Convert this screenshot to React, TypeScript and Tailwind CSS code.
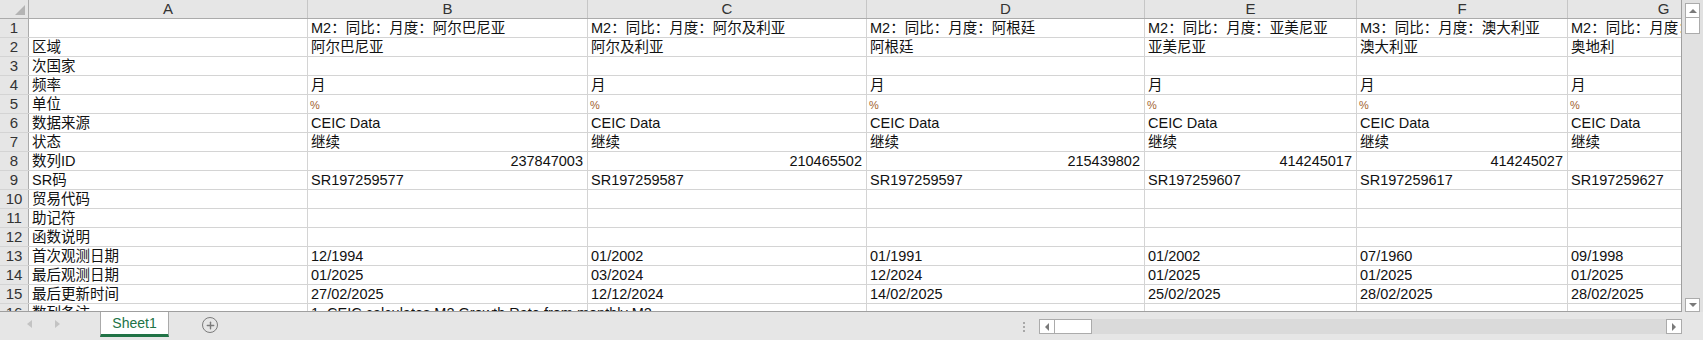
import { Plus } from "lucide-react";

type Cell = string | { text: string; align?: "right" | "pct" | "overflow" };

const columns = [
  { label: "A", width: "w-[279px]" },
  { label: "B", width: "w-[280px]" },
  { label: "C", width: "w-[279px]" },
  { label: "D", width: "w-[278px]" },
  { label: "E", width: "w-[212px]" },
  { label: "F", width: "w-[211px]" },
  { label: "G", width: "w-[192px]" },
];

const num = (text: string): Cell => ({ text, align: "right" });
const pct: Cell = { text: "%", align: "pct" };

const rows: Cell[][] = [
  [
    "",
    "M2：同比：月度：阿尔巴尼亚",
    "M2：同比：月度：阿尔及利亚",
    "M2：同比：月度：阿根廷",
    "M2：同比：月度：亚美尼亚",
    "M3：同比：月度：澳大利亚",
    "M2：同比：月度：奥地利",
  ],
  ["区域", "阿尔巴尼亚", "阿尔及利亚", "阿根廷", "亚美尼亚", "澳大利亚", "奥地利"],
  ["次国家", "", "", "", "", "", ""],
  ["频率", "月", "月", "月", "月", "月", "月"],
  ["单位", pct, pct, pct, pct, pct, pct],
  ["数据来源", "CEIC Data", "CEIC Data", "CEIC Data", "CEIC Data", "CEIC Data", "CEIC Data"],
  ["状态", "继续", "继续", "继续", "继续", "继续", "继续"],
  ["数列ID", num("237847003"), num("210465502"), num("215439802"), num("414245017"), num("414245027"), num("414245037")],
  ["SR码", "SR197259577", "SR197259587", "SR197259597", "SR197259607", "SR197259617", "SR197259627"],
  ["贸易代码", "", "", "", "", "", ""],
  ["助记符", "", "", "", "", "", ""],
  ["函数说明", "", "", "", "", "", ""],
  ["首次观测日期", "12/1994", "01/2002", "01/1991", "01/2002", "07/1960", "09/1998"],
  ["最后观测日期", "01/2025", "03/2024", "12/2024", "01/2025", "01/2025", "01/2025"],
  ["最后更新时间", "27/02/2025", "12/12/2024", "14/02/2025", "25/02/2025", "28/02/2025", "28/02/2025"],
  [
    "数列备注",
    { text: "1. CEIC calculates M2 Growth Rate from monthly M2.", align: "overflow" },
    "",
    "",
    "",
    "",
    "",
  ],
];

function GridCell({ cell, width }: { cell: Cell; width: string }) {
  const item = typeof cell === "string" ? { text: cell } : cell;

  if (item.align === "pct") {
    return (
      <div className={`${width} flex shrink-0 items-end border-r border-[#d4d4d4] px-[2px] pb-[2px]`}>
        <span className="text-[11px] leading-[12px] text-[#a3622e]">%</span>
      </div>
    );
  }

  return (
    <div
      className={`${width} flex shrink-0 items-end whitespace-nowrap border-r border-[#d4d4d4] px-[3px] pb-[1px] leading-[16px] ${
        item.align === "right" ? "justify-end pr-[4px]" : ""
      } ${item.align === "overflow" ? "relative z-10 overflow-visible" : "overflow-hidden"}`}
    >
      {item.text}
    </div>
  );
}

function ScrollButton({ dir, className = "" }: { dir: "up" | "down" | "left" | "right"; className?: string }) {
  const shape = {
    up: "border-x-[4px] border-b-[4px] border-x-transparent border-b-[#7a7a7a]",
    down: "border-x-[4px] border-t-[4px] border-x-transparent border-t-[#7a7a7a]",
    left: "border-y-[4px] border-r-[4px] border-y-transparent border-r-[#7a7a7a]",
    right: "border-y-[4px] border-l-[4px] border-y-transparent border-l-[#7a7a7a]",
  }[dir];

  return (
    <div className={`flex items-center justify-center border border-[#ababab] bg-[#ffffff] ${className}`}>
      <div className={`h-0 w-0 ${shape}`} />
    </div>
  );
}

export default function App() {
  return (
    <div
      className="flex h-[340px] w-[1703px] flex-col overflow-hidden bg-[#e6e6e6] text-[14.5px] text-[#111111]"
      style={{ fontFamily: '"Liberation Sans", "Noto Sans CJK SC", sans-serif' }}
    >
      <div className="flex h-[312px] shrink-0">
        <div className="h-[312px] w-[1682px] shrink-0 overflow-hidden border-b border-r border-[#9f9f9f] bg-[#ffffff]">
          <div className="flex h-[19px] border-b border-[#ababab] bg-[#e6e6e6]">
            <div className="relative w-[29px] shrink-0 border-r border-[#ababab]">
              <div className="absolute bottom-[3px] right-[3px] h-0 w-0 border-b-[10px] border-l-[10px] border-b-[#b4b4b4] border-l-transparent" />
            </div>
            {columns.map((column) => (
              <div
                key={column.label}
                className={`${column.width} flex shrink-0 items-center justify-center border-r border-[#c6c6c6] text-[15px] leading-[18px] text-[#333333]`}
              >
                {column.label}
              </div>
            ))}
          </div>
          {rows.map((row, rowIndex) => (
            <div key={rowIndex} className="flex h-[19px] border-b border-[#d4d4d4]">
              <div className="flex w-[29px] shrink-0 items-center justify-center border-r border-[#ababab] bg-[#e6e6e6] text-[15px] leading-[18px] text-[#333333]">
                {rowIndex + 1}
              </div>
              {row.map((cell, cellIndex) => (
                <GridCell key={cellIndex} cell={cell} width={columns[cellIndex].width} />
              ))}
            </div>
          ))}
        </div>
        <div className="flex w-[21px] shrink-0 flex-col items-center bg-[#e1e1e1] pt-[3px]">
          <ScrollButton dir="up" className="h-[15px] w-[15px]" />
          <div className="h-[16px] w-[15px] border-x border-b border-[#ababab] bg-[#ffffff]" />
          <div className="flex-1" />
          <ScrollButton dir="down" className="h-[14px] w-[15px]" />
        </div>
      </div>

      <div className="flex h-[28px] items-start">
        <div className="flex h-[24px] w-[100px] items-center gap-[23px] pl-[27px]">
          <div className="h-0 w-0 border-y-[4px] border-r-[5px] border-y-transparent border-r-[#c3c3c3]" />
          <div className="h-0 w-0 border-y-[4px] border-l-[5px] border-y-transparent border-l-[#c3c3c3]" />
        </div>
        <div className="flex h-[25px] w-[69px] items-center justify-center border-x border-b-[3px] border-x-[#aaaaaa] border-b-[#217346] bg-[#ffffff] text-[14px] text-[#217346]">
          Sheet1
        </div>
        <div className="ml-[33px] mt-[5px] flex h-[16px] w-[16px] items-center justify-center rounded-full border-[1.5px] border-[#7b7b7b]">
          <Plus className="h-[11px] w-[11px] text-[#7b7b7b]" strokeWidth={3} />
        </div>
        <div className="ml-[805px] mt-[10px] flex flex-col gap-[2px]">
          <div className="h-[2px] w-[2px] bg-[#a8a8a8]" />
          <div className="h-[2px] w-[2px] bg-[#a8a8a8]" />
          <div className="h-[2px] w-[2px] bg-[#a8a8a8]" />
        </div>
        <div className="ml-[14px] mt-[7px] flex h-[15px] w-[643px] bg-[#dadada]">
          <ScrollButton dir="left" className="h-[15px] w-[16px]" />
          <div className="h-[15px] w-[37px] border-y border-r border-[#ababab] bg-[#ffffff]" />
          <div className="flex-1" />
          <ScrollButton dir="right" className="h-[15px] w-[16px]" />
        </div>
      </div>
    </div>
  );
}
